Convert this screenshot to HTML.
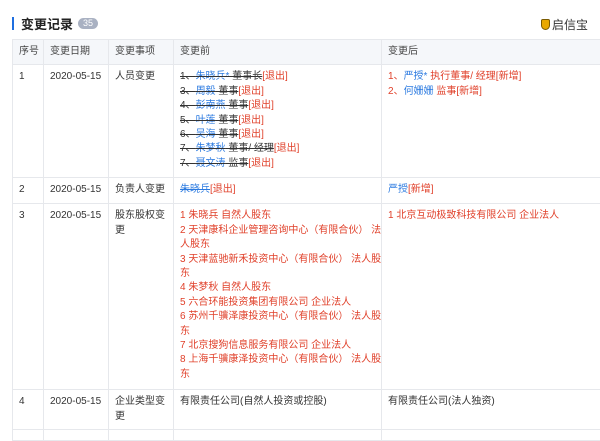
<!DOCTYPE html>
<html><head><meta charset="utf-8"><style>
body{margin:0;background:#fff;width:600px;height:433px;overflow:hidden;font-family:"Liberation Sans","Noto Sans CJK SC",sans-serif;font-size:10px;color:#333}
.title{position:absolute;left:12px;top:15px;height:16px;display:flex;align-items:center}
.bar{width:2px;height:13px;background:#1f6fe0;margin-right:7px}
.t{font-size:13px;font-weight:bold;color:#222}
.badge{margin-left:5px;background:#a9b1c2;color:#fff;border-radius:7px;font-size:9px;padding:0 5px;height:11px;line-height:11px}
.logo{position:absolute;right:12px;top:16px;font-size:12px;color:#333;display:flex;align-items:center}
.sh{width:9px;height:11px;background:#e8a800;border-radius:2px 2px 5px 5px;margin-right:2px;border:1px solid #7a5a00;box-sizing:border-box}
table{position:absolute;left:12px;top:39px;border-collapse:collapse;width:589px;table-layout:fixed}
td,th{border:1px solid #e6e8ec;vertical-align:top;padding:5px 2px 5px 6px;line-height:14.4px;text-align:left;font-weight:normal;font-size:10px;white-space:nowrap}
td.w{white-space:normal;padding-right:3px}
th{background:#f5f7fa;height:13px;padding:5px 2px 5px 6px;color:#444}
.b{color:#2b7ae0}.r{color:#e0402a}.s{text-decoration:line-through}
</style></head><body>
<div class="title"><div class="bar"></div><span class="t">变更记录</span><span class="badge">35</span></div>
<div class="logo"><div class="sh"></div>启信宝</div>
<table>
<colgroup><col style="width:31px"><col style="width:65px"><col style="width:65px"><col style="width:208px"><col></colgroup>
<tr><th>序号</th><th>变更日期</th><th>变更事项</th><th>变更前</th><th>变更后</th></tr>
<tr style="height:113px"><td>1</td><td>2020-05-15</td><td>人员变更</td><td>
<span class="s">1、<span class="b">朱晓兵*</span> 董事长</span><span class="r">[退出]</span><br>
<span class="s">3、<span class="b">周毅</span> 董事</span><span class="r">[退出]</span><br>
<span class="s">4、<span class="b">彭南燕</span> 董事</span><span class="r">[退出]</span><br>
<span class="s">5、<span class="b">叶莲</span> 董事</span><span class="r">[退出]</span><br>
<span class="s">6、<span class="b">吴海</span> 董事</span><span class="r">[退出]</span><br>
<span class="s">7、<span class="b">朱梦秋</span> 董事/ 经理</span><span class="r">[退出]</span><br>
<span class="s">7、<span class="b">聂文涛</span> 监事</span><span class="r">[退出]</span></td>
<td class="r">1、<span class="b">严授*</span> 执行董事/ 经理[新增]<br>2、<span class="b">何姗姗</span> 监事[新增]</td></tr>
<tr style="height:26px"><td>2</td><td>2020-05-15</td><td>负责人变更</td><td><span class="b s">朱晓兵</span><span class="r">[退出]</span></td><td><span class="b">严授</span><span class="r">[新增]</span></td></tr>
<tr style="height:186px"><td>3</td><td>2020-05-15</td><td class="w">股东股权变更</td><td class="r">1 朱晓兵 自然人股东<br>2 天津康科企业管理咨询中心（有限合伙） 法<br>人股东<br>3 天津蓝驰新禾投资中心（有限合伙） 法人股<br>东<br>4 朱梦秋 自然人股东<br>5 六合环能投资集团有限公司 企业法人<br>6 苏州千骥泽康投资中心（有限合伙） 法人股<br>东<br>7 北京搜狗信息服务有限公司 企业法人<br>8 上海千骥康泽投资中心（有限合伙） 法人股<br>东</td><td class="r">1 北京互动极致科技有限公司 企业法人</td></tr>
<tr style="height:39px"><td>4</td><td>2020-05-15</td><td class="w">企业类型变更</td><td>有限责任公司(自然人投资或控股)</td><td>有限责任公司(法人独资)</td></tr>
<tr><td></td><td></td><td></td><td></td><td></td></tr>
</table>
</body></html>
